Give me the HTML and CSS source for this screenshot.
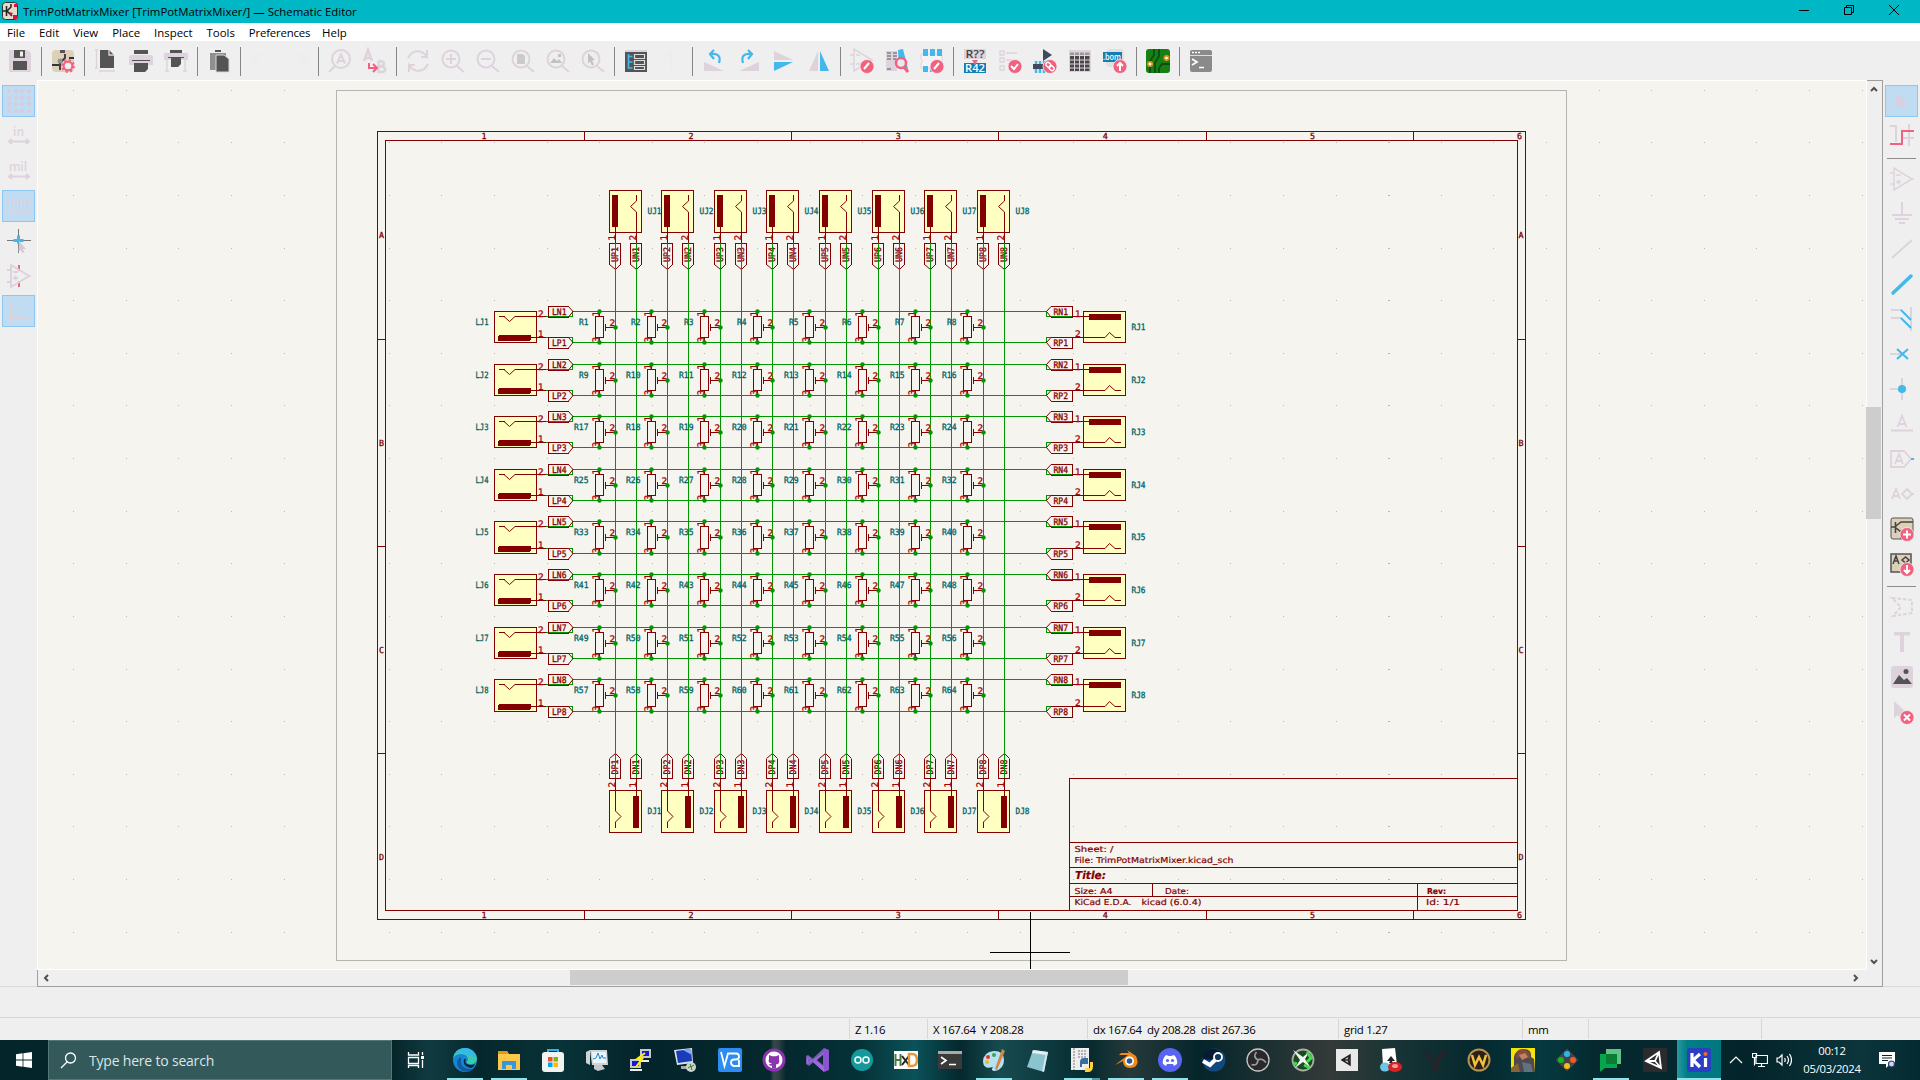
FILE: index.html
```html
<!DOCTYPE html>
<html lang="en">
<head>
<meta charset="utf-8">
<title>TrimPotMatrixMixer — Schematic Editor</title>
<link rel="stylesheet" href="styles.css">
</head>
<body>
<header class="titlebar">
  <svg class="app-icon" viewBox="0 0 16 18"><rect x=".5" y=".5" width="15" height="17" rx="3" fill="#e4dccb" stroke="#333"/><path d="M1 9h3M4.500 4v10M5 9l4-4V2M5 9l5 5" stroke="#222" stroke-width="1.500" fill="none"/><path d="M12 2h3v3h-3zM11 13h4v4h-4zM7 10l4 1-2 3z" fill="#e0123c"/></svg>
  <span class="title">TrimPotMatrixMixer [TrimPotMatrixMixer/] — Schematic Editor</span>
  <div class="controls">
    <svg viewBox="0 0 12 12"><path d="M1 6.500h10"/></svg>
    <svg viewBox="0 0 12 12"><path d="M1.500 3.500h7v7h-7zM3.500 3.500v-2h7v7h-2"/></svg>
    <svg viewBox="0 0 12 12"><path d="M1 1l10 10M11 1L1 11"/></svg>
  </div>
</header>
<nav class="menu"><span>File</span><span>Edit</span><span>View</span><span>Place</span><span>Inspect</span><span>Tools</span><span class="prefs">Preferences</span><span>Help</span></nav>

<div class="toolbar">
  <i><svg viewBox="0 0 24 24"><path d="M1 1h18l4 3v19H1z" fill="#ded3dd"/><path d="M6 1h11v8H6zM5 12h14v9H5z" fill="#545454"/><path d="M12 2.500h3v5h-3z" fill="#eee"/></svg></i><b></b>
  <i><svg viewBox="0 0 24 24"><rect x="1" y="1" width="22" height="22" rx="4" fill="#ddd0b9"/><path d="M9 1h5v3H9z" fill="#555"/><path d="M1 16h7M9 12v9M10 13l4-4V5M18 9h5" fill="none" stroke="#333" stroke-width="1.800"/><circle cx="9" cy="12" r="2.500" fill="#8c9494"/><circle cx="17" cy="17" r="4.300" fill="#efefef" stroke="#f0627f" stroke-width="2"/><circle cx="17" cy="17" r="5.800" fill="none" stroke="#f0627f" stroke-width="2.200" stroke-dasharray="2.200 2.350"/></svg></i><b></b>
  <i><svg viewBox="0 0 24 24"><path d="M6 1h9l5 5v13H6z" fill="#545454"/><path d="M15 1v5h5M1 1h3M2.500 1v18M1 19h3M6 22h14M6 20.500v3M20 20.500v3" fill="none" stroke="#ded3dd" stroke-width="1.300"/></svg></i>
  <i><svg viewBox="0 0 24 24"><path d="M0 8q0-2 2-2h20q2 0 2 2v8H0z" fill="#ded3dd"/><path d="M5 1h14v4H5zM5 14h14v6l-3 3H5z" fill="#545454"/><path d="M3 11.500h18" stroke="#545454"/></svg></i>
  <i><svg viewBox="0 0 24 24"><path d="M0 4h24v7H0z" fill="#ded3dd"/><path d="M6 1h12v3H6zM7 9h10v6l-3 3H7z" fill="#545454"/><path d="M4 8.500h16" stroke="#545454"/><path d="M3 11v11M21 11v11M1 22h4M19 22h4" stroke="#ded3dd" stroke-width="1.500"/></svg></i><b></b>
  <i><svg viewBox="0 0 24 24"><path d="M3 4h16v17H3z" fill="#8f8f8f"/><path d="M8 1h6v2H8z" fill="#545454"/><path d="M9 6h8l5 4v13H9z" fill="#545454" stroke="#ded3dd"/></svg></i><b></b>
  <i><svg class="ghost" viewBox="0 0 24 24"><path d="M3 5v7h7M4 11Q12 0 21 13" /></svg></i><i><svg class="ghost" viewBox="0 0 24 24"><path d="M21 5v7h-7M20 11Q12 0 3 13"/></svg></i><b></b>
  <i><svg class="line" viewBox="0 0 24 24"><circle cx="13" cy="10" r="9"/><path d="M7 17l-6 6M9 14.500l4-9 4 9M10 12h6"/></svg></i>
  <i><svg class="line" viewBox="0 0 24 24"><path d="M1 12L5 1l4 11M2.500 9h5M15.500 12v11h4q4-1 2-4.500-1-1-6-1 5 0 5.500-3-.5-2.500-5.500-2.500" stroke-width="2.500"/><path d="M6 14v5h8M10 15l4 4-4 4" style="stroke:#f0627f"/></svg></i><b></b>
  <i><svg class="line" viewBox="0 0 24 24"><path d="M2 9Q6 1 14 2.500q4 1 7 5V1M21 8h-6M22 15q-4 8-12 6.500-4-1-7-5V23M3 16h6"/></svg></i>
  <i><svg class="line" viewBox="0 0 24 24"><circle cx="10" cy="10" r="8.500"/><path d="M16 17l7 6M5 10h10M10 5v10"/></svg></i>
  <i><svg class="line" viewBox="0 0 24 24"><circle cx="10" cy="10" r="8.500"/><path d="M16 17l7 6M5 10h10"/></svg></i>
  <i><svg class="line" viewBox="0 0 24 24"><circle cx="10" cy="10" r="8.500"/><path d="M16 17l7 6"/><path d="M6 5h6l2 2v8H6z" style="fill:#c9ccc9;stroke:none"/></svg></i>
  <i><svg class="line" viewBox="0 0 24 24"><circle cx="10" cy="10" r="8.500"/><path d="M16 17l7 6"/><path d="M4 14l4-5 3 3 2-2 3 4zM12 5h3v3h-3z" style="fill:#c0c3c0;stroke:none"/></svg></i>
  <i><svg class="line" viewBox="0 0 24 24"><circle cx="10" cy="10" r="8.500"/><path d="M16 17l7 6"/><path d="M7 4l7 7-3 .5 2 4-2 1-2-4-2 2z" style="fill:#c0c3c0;stroke:none"/></svg></i><b></b>
  <i><svg viewBox="0 0 24 24"><path d="M1 2h22v21H1z" fill="#545454"/><path d="M1 1h22v2H1z" fill="#ded3dd"/><path d="M4.500 5v14h4M4.500 7.500h4M4.500 13h4" stroke="#42b8eb" stroke-width="1.700" fill="none"/><path d="M10.500 5.500h10v4h-10zM10.500 11.500h10v4h-10zM10.500 17.500h10v3h-10z" fill="none" stroke="#ddd" stroke-width="1.200"/></svg></i>
  <i><svg class="ghost" viewBox="0 0 24 24"><path d="M12 23V3M6 9l6-6 6 6"/></svg></i><b></b>
  <i><svg viewBox="0 0 24 24"><path d="M2 13v9h20z" fill="#ded3dd"/><path d="M17 14Q20 4 9 5M12 1L8 5l4 5" fill="none" stroke="#42b8eb" stroke-width="2.200"/></svg></i>
  <i><svg viewBox="0 0 24 24"><path d="M22 13v9H2z" fill="#ded3dd"/><path d="M6 14Q3 4 14 5M11 1l4 4-4 5" fill="none" stroke="#42b8eb" stroke-width="2.200"/></svg></i>
  <i><svg viewBox="0 0 24 24"><path d="M2 2v9h19z" fill="#ded3dd"/><path d="M2 13v9l19-9z" fill="#42b8eb"/></svg></i>
  <i><svg viewBox="0 0 24 24"><path d="M11 2v20H2z" fill="#ded3dd"/><path d="M13 2v20h9z" fill="#42b8eb"/></svg></i><b></b>
  <i><svg class="line" viewBox="0 0 24 24"><path d="M4 0v22l18-11zM0 6h4M0 15h4M6 6h4M6 15h4" stroke-width="1.500"/><use href="#badge"/><path class="w" d="M14 20l5-6"/></svg></i>
  <i><svg viewBox="0 0 24 24"><path d="M1 2h11v20H1z" fill="#ded3dd"/><path d="M13 1l5-1 5 20h-9z" fill="#42b8eb"/><path d="M2 4h4M8 4h4M2 7h4M8 7h4M2 10h4M8 10h3M2 20h4" stroke="#545454"/><circle cx="16" cy="14" r="5" fill="#e5eaf0" stroke="#f0627f" stroke-width="2.500"/><path d="M19 18l4 5" stroke="#f0627f" stroke-width="3"/></svg></i>
  <i><svg viewBox="0 0 24 24"><path d="M1 5h21v14H1v-4q3-2.500 0-5z" fill="#f5f3f5" stroke="#ded3dd"/><path d="M3 0h5v7H3zM10 0h5v7h-5zM17 0h5v7h-5zM3 17h5v6H3zM10 17h5v6h-5z" fill="#42b8eb"/><use href="#badge"/><path class="w" d="M14 20l5-6"/></svg></i><b></b>
  <i><svg viewBox="0 0 24 24"><path d="M1 0h22v10H1z" fill="#ded3dd"/><path d="M1 14h22v10H1z" fill="#147eb4"/><path d="M9 11h6l-3 5z" fill="#f0627f"/><text x="2.500" y="9" textLength="19" lengthAdjust="spacingAndGlyphs" class="ic">R??</text><text x="2" y="23" textLength="20" lengthAdjust="spacingAndGlyphs" class="ic white">R42</text></svg></i>
  <i><svg class="line" viewBox="0 0 24 24"><path d="M2 2h4v4H2zM2 9h4v4H2zM2 17h4v4H2zM8 4h11M8 11h6" stroke-width="1.300"/><use href="#badge"/><path class="w" d="M13 17l3 3 4-5"/></svg></i>
  <i><svg viewBox="0 0 24 24"><path d="M10 0l9 6-9 6z" fill="#3f4a5c"/><path d="M0 15h14v5H0z" fill="#3f4a5c"/><path d="M3 12v3M7 12v3M11 12v3M3 20v4M7 20v4M11 20v4" stroke="#42b8eb" stroke-width="2.500"/><use href="#badge"/><g fill="none" stroke="#fff" stroke-width="1.400" transform="rotate(45 17 17.500)"><rect x="12" y="15.500" width="5.500" height="4" rx="2"/><rect x="16.500" y="15.500" width="5.500" height="4" rx="2"/></g></svg></i>
  <i><svg viewBox="0 0 24 24"><path d="M1 1h22v22H1z" fill="#ded3dd"/><path d="M2 3.500h19.500V6H2z" fill="#999"/><path d="M2 7h19.500v15H2z" fill="#484848"/><path d="M6.500 3v19M11.500 3v19M16.500 3v19M2 11h20M2 15h20M2 19h20" stroke="#ded3dd"/></svg></i>
  <i><svg viewBox="0 0 24 24"><rect x="3" width="18" height="18" rx="4" fill="#e1dfe2"/><path d="M0 3h19v10H0z" fill="#147eb4"/><text x="0" y="11" textLength="18" lengthAdjust="spacingAndGlyphs" class="ic white bom">.bom</text><use href="#badge"/><path class="w" d="M17 22v-8M14 17l3-3 3 3"/></svg></i><b></b>
  <i><svg viewBox="0 0 24 24"><rect width="24" height="24" rx="3" fill="#168016"/><path d="M8 0v6L4 12v12M13 0v7l-4 7v10M24 15h-8l-3 4v5" fill="none" stroke="#0a4f0d" stroke-width="1.800"/><circle cx="20.500" cy="9" r="2.200" fill="#fff" stroke="#e09015" stroke-width="1.700"/><circle cx="4" cy="15" r="2.200" fill="#fff" stroke="#e09015" stroke-width="1.700"/></svg></i><b></b>
  <i><svg viewBox="0 0 24 24"><rect x="1" y="1" width="22" height="22" rx="2" fill="#8a8a8a"/><path d="M1 6.500h22" stroke="#ddd"/><path d="M3 3.500h2M6 3.500h2M9 3.500h2M3 10l5 3-5 3M10 18.500h5" stroke="#fff" stroke-width="1.700" fill="none"/></svg></i>
</div>

<main class="work">
  <div class="side left">
    <i class="on"><svg class="dots" viewBox="0 0 24 24"><path d="M2 2h.1M9 2h.1M15 2h.1M22 2h.1M2 9h.1M9 9h.1M15 9h.1M22 9h.1M2 15h.1M9 15h.1M15 15h.1M22 15h.1M2 22h.1M9 22h.1M15 22h.1M22 22h.1"/></svg></i>
    <i><svg class="line" viewBox="0 0 24 24"><text x="6" y="12" textLength="11" class="unit">in</text><path d="M3 17.500h18M5 15l-3 2.500 3 2.500M19 15l3 2.500-3 2.500"/></svg></i>
    <i><svg class="line" viewBox="0 0 24 24"><text x="2" y="12" textLength="18" class="unit">mil</text><path d="M3 17.500h18M5 15l-3 2.500 3 2.500M19 15l3 2.500-3 2.500"/></svg></i>
    <i class="on"><svg class="line" viewBox="0 0 24 24"><text x="0" y="12" textLength="23" class="unit">mm</text><path d="M3 17.500h18M5 15l-3 2.500 3 2.500M19 15l3 2.500-3 2.500"/></svg></i>
    <i><svg viewBox="0 0 24 24"><path d="M0 11.500h24M11.500 0v24" stroke="#777"/><path d="M6.500 11.500h10M11.500 6.500v8" stroke="#42b8eb" stroke-width="3"/><path d="M12 12l7 8-3.500 0 2 3-2 1-2-3-2 2z" fill="#d5c9d6"/></svg></i>
    <i><svg class="line" viewBox="0 0 24 24"><path d="M12 1v6M12 17v6" style="stroke:#f0627f"/><path d="M4 1v22l18-11zM0 6h4M0 18h4M22 12h2M6 8h5M6 14h5M8.500 11.500v5"/></svg></i>
    <i class="on"><svg class="line" viewBox="0 0 24 24"><path d="M4 2v18h19" /><path d="M1 20l5-3v6zM4 12h8v8" stroke-width="1"/></svg></i>
  </div>
  <div class="viewport">
    <svg id="sheet" viewBox="38 81 1828 888" shape-rendering="crispEdges"></svg>
    <div class="vscroll"><svg viewBox="0 0 8 6"><path d="M1 5l3-3 3 3"/></svg><span class="vthumb"></span><svg viewBox="0 0 8 6"><path d="M1 1l3 3 3-3"/></svg></div>
    <div class="hscroll"><svg viewBox="0 0 6 8"><path d="M5 1L2 4l3 3"/></svg><span class="hthumb"></span><svg viewBox="0 0 6 8"><path d="M1 1l3 3-3 3"/></svg></div>
  </div>
  <div class="side right">
    <i class="on"><svg viewBox="0 0 24 24"><path d="M6 4l12 10h-5l3 5-3 1-3-5-4 3z" fill="#d8cfdf"/></svg></i>
    <i><svg class="line" viewBox="0 0 24 24"><path d="M0 2h6v16M19 0v22M13 14h11"/><path d="M0 20h12V7h12" style="stroke:#f0627f"/></svg></i><b></b>
    <i><svg class="line" viewBox="0 0 24 24"><path d="M4 1v22l18-11zM0 6h4M0 17h4M22 12h2M6 8h5M6 15h5M8.500 12.500v5" stroke-width="1.500"/></svg></i>
    <i><svg class="line" viewBox="0 0 24 24"><path d="M12 0v13M2 13h20M5 17h14M9 21h6"/></svg></i>
    <i><svg class="line" viewBox="0 0 24 24"><path d="M2 21L22 3"/></svg></i>
    <i><svg viewBox="0 0 24 24"><path d="M3 21L21 4" stroke="#42b8eb" stroke-width="3.500" stroke-linecap="round"/></svg></i>
    <i><svg class="line" viewBox="0 0 24 24"><path d="M1 3h11M1 11h11M21 0v24" /><path d="M11 3l10 10M11 11l10 10" style="stroke:#42b8eb"/></svg></i>
    <i><svg class="line" viewBox="0 0 24 24"><path d="M0 12h12"/><path d="M7 7l11 10M18 7L7 17" style="stroke:#42b8eb"/></svg></i>
    <i><svg class="line" viewBox="0 0 24 24"><path d="M0 12h12M12 1v22"/><circle cx="12" cy="12" r="4" style="fill:#42b8eb;stroke:none"/></svg></i>
    <i><svg class="line" viewBox="0 0 24 24"><path d="M7.500 15L12 4l4.500 11M9 12h6M1 18.500h22" stroke-width="1.800"/></svg></i>
    <i><svg class="line" viewBox="0 0 24 24"><path d="M1 4h13l7 8-7 8H1zM5 17L9 7l4 10M6 14h6" stroke-width="1.800"/><path d="M21 12h3" style="stroke:#42b8eb"/></svg></i>
    <i><svg class="line" viewBox="0 0 24 24"><path d="M2 17L6 7l4 10M3 14h6M12 12l5-5 5 5-5 5zM21 12h3" stroke-width="1.800"/></svg></i>
    <i><svg viewBox="0 0 24 24"><rect x="1" y="1" width="22" height="21" rx="2" fill="#ddd0b9" stroke="#545454"/><path d="M1 10h4M5.500 5v11M6 9l5-4h12M6 11l5 4v7" stroke="#444" stroke-width="1.600" fill="none"/><use href="#badge"/><path class="w" d="M13 17.500h8M17 13.500v8"/></svg></i>
    <i><svg viewBox="0 0 24 24"><path d="M1 2h20v18H1z" fill="#ddd0b9" stroke="#545454" stroke-width="1.500"/><path d="M3 12L6 4l3 8M4 9h4M12 8l3.500-3L19 8l-3.500 3z" stroke="#444" stroke-width="1.500" fill="none"/><use href="#badge"/><path class="w" d="M17 13v8M14 18l3 3 3-3"/></svg></i><b></b>
    <i><svg class="line" viewBox="0 0 24 24"><path d="M2 3l20 2v13L3 21l8-9z" stroke-dasharray="3.500 2"/></svg></i>
    <i><svg viewBox="0 0 24 24"><path d="M4 2h16v3.500h-6V22h-4V5.500H4z" fill="#ded3dd"/></svg></i>
    <i><svg viewBox="0 0 24 24"><rect x="1" y="1" width="22" height="22" rx="3" fill="#ded3dd"/><path d="M3 19l6-9 5 5 3-2 5 6z" fill="#545454"/><circle cx="16" cy="6.500" r="2.500" fill="#545454"/></svg></i>
    <i><svg viewBox="0 0 24 24"><path d="M4 1l12 11-4 1 2 5-3 1-3-4-4 3z" fill="#ded3dd"/><use href="#badge"/><path class="w" d="M14 14.500l6 6M20 14.500l-6 6"/></svg></i>
  </div>
</main>
<div class="msgpanel"></div>
<footer class="status"><span class="s0"></span><span class="s1">Z 1.16</span><span class="s2">X 167.64&nbsp; Y 208.28</span><span class="s3">dx 167.64&nbsp; dy 208.28&nbsp; dist 267.36</span><span class="s4">grid 1.27</span><span class="s5">mm</span><span class="s6"></span><span class="s7"></span></footer>

<div class="taskbar">
  <div class="start"><svg viewBox="0 0 16 16"><path d="M0 2.200L6.600 1.300v6.300H0zM7.400 1.200L16 0v7.600H7.400zM0 8.400h6.600v6.300L0 13.800zM7.400 8.400H16V16l-8.600-1.200z" fill="#fff"/></svg></div>
  <div class="search"><svg viewBox="0 0 17 17"><circle cx="10.500" cy="6" r="5"/><path d="M7 10l-6 6"/></svg><span>Type here to search</span></div>
  <div class="apps">
  <i class="tv"><svg viewBox="0 0 24 24"><path d="M4.500 4v3h10V4M4.500 9.500h10v6h-10zM4.500 20v-2.500h10V20M18.500 4v3M18.500 12v8" stroke="#fff" fill="none" stroke-width="1.300"/><path d="M17 8h3v3h-3z" fill="#fff"/></svg></i>
  <i class="run"><svg viewBox="0 0 24 24"><circle cx="12" cy="12" r="12" fill="#1686d2"/><path d="M0 10Q2 0 12 0q11 1 12 11-1 6-8 5-4-1-1-4 0-6-7-6-5 0-8 4z" fill="#3ccaa8"/><path d="M5 5q6-2 10 3l8 1Q20 0 12 0 4 1 1 7z" fill="#35b9e8"/><path d="M8 12q-1 10 12 9-9 6-15-2-3-7 3-10z" fill="#115a9e"/><path d="M11 11q-2 7 7 9 3-1 4-4-4 2-8 0-3-2-1-5z" fill="#03282d"/></svg></i>
  <i class="run"><svg viewBox="0 0 24 24"><path d="M1 3h9l2 3h11v16H1z" fill="#fbc84a"/><path d="M1 3h9l1 3H1z" fill="#e09a10"/><path d="M5 21v-8h14v8h-4v-4h-6v4z" fill="#3a95dd"/></svg></i>
  <i><svg viewBox="0 0 24 24"><path d="M7 7V2h10v5" fill="none" stroke="#2bb1ec" stroke-width="2"/><rect x="1" y="4" width="22" height="20" rx="3" fill="#f2f2f2"/><path d="M7 9h4.500v4.500H7z" fill="#f25022"/><path d="M12.500 9H17v4.500h-4.500z" fill="#7fba00"/><path d="M7 14.500h4.500V19H7z" fill="#00a4ef"/><path d="M12.500 14.500H17V19h-4.500z" fill="#ffb900"/></svg></i>
  <i><svg viewBox="0 0 24 24"><path d="M1 4l4-2v15l-4-2zM5 2h17l1 15H7z" fill="#cfd4d6"/><path d="M7 4h14l.5 11H8z" fill="#e9f4fa"/><path d="M8 11l3-1 2-5 2 6 2-4 1 3h3" fill="none" stroke="#2787c8"/><path d="M9 17h8l3 4-7 2-4-2z" fill="#c5c9cb"/></svg></i>
  <i><svg viewBox="0 0 24 24"><path d="M11 1h11v9H11zM1 11h11v9H1z" fill="#c8c8c8"/><path d="M13 3h7v5h-7zM3 13h7v5H3z" fill="#1717d8"/><path d="M10 12h10v2H10zM1 21h12v2H1z" fill="#eee"/><path d="M16 5l-8 6h5l-6 8" fill="none" stroke="#ffef00" stroke-width="2"/></svg></i>
  <i><svg viewBox="0 0 24 24"><path d="M1 2l18-2 1 15-16 2z" fill="#dce4ef"/><path d="M3 3l15-2 1 12-14 2z" fill="#193cb8"/><path d="M10 2l8-1 1 6z" fill="#88a9ef"/><path d="M8 18h8v3H8z" fill="#aaa"/><circle cx="18" cy="19" r="5" fill="#ccd5c9"/><path d="M15 20l3-2-1-2M21 17l-3 2 1 3" stroke="#287b2a" fill="none"/></svg></i>
  <i><svg viewBox="0 0 24 24"><rect width="24" height="24" rx="2" fill="#2b8cf2"/><path d="M3 4l3.500 14L10 5.500h8q3 0 3 3t-3 3h-2q-3 0-3 3t3 3.500h5V12" fill="none" stroke="#fff" stroke-width="1.800"/></svg></i>
  <i><svg viewBox="0 0 24 24"><circle cx="12" cy="12" r="11.500" fill="#8a34ad"/><circle cx="12" cy="12" r="8.500" fill="#fff"/><path d="M7 7l3 1.200h4L17 7v4q1.500 5-3 5.500v4h-4v-3q-2.500 1-3.500-1.500 2 .8 3.500-.5Q5.500 15 7 11z" fill="#8a34ad"/></svg></i>
  <i><svg viewBox="0 0 24 24"><path d="M18 0l5 2v20l-5 2L2 9l-1 1v5l1 1L18 4z" fill="#8b55d0"/><path d="M18 0v5L3 18l-3-2V8l2-1 16 12v5L2 10v5z" fill="#a873e8" opacity=".7"/><path d="M17 7v10l-6-5z" fill="#0c2b30"/></svg></i>
  <i><svg viewBox="0 0 24 24"><circle cx="12" cy="12" r="11" fill="#149a9d"/><circle cx="8" cy="12" r="3" fill="none" stroke="#fff" stroke-width="1.500"/><circle cx="16" cy="12" r="3" fill="none" stroke="#fff" stroke-width="1.500"/></svg></i>
  <i><svg viewBox="0 0 24 24"><path d="M0 3h24v18H0z" fill="#fff"/><path d="M1.500 6v12M6.500 6v12M1 12h6" stroke="#4a7a42" stroke-width="2"/><path d="M8 8l7 9M15 8l-7 9" stroke="#222" stroke-width="2"/><path d="M15 6h3q5 0 5 6t-5 6h-3z" fill="none" stroke="#e59a42" stroke-width="2.500"/></svg></i>
  <i><svg viewBox="0 0 24 24"><path d="M0 3h24v18H0z" fill="#3a3a3a"/><path d="M0 3h24v3H0z" fill="#aaa"/><path d="M3 9l5 3.500L3 16M11 16.500h7" fill="none" stroke="#fff" stroke-width="1.700"/></svg></i>
  <i class="run"><svg viewBox="0 0 24 24"><path d="M1 14Q1 4 12 3q10 0 10 9t-9 11q-5 0-2-4-9 3-10-5z" fill="#b9dff2"/><circle cx="6" cy="9" r="2" fill="#e83030"/><circle cx="12" cy="7" r="2" fill="#39a845"/><circle cx="5" cy="14" r="2" fill="#e5bd18"/><path d="M13 21L20 1l3 2-8 19z" fill="#cc8844"/></svg></i>
  <i><svg viewBox="0 0 24 24"><path d="M7 2l15 2-4 20L1 19z" fill="#8ac5cf"/><path d="M7 2l15 2-1 3L6 5z" fill="#e7edf0"/><path d="M22 4l-4 20-2-1 4-19z" fill="#d0e6e9"/></svg></i>
  <i class="run split"><svg viewBox="0 0 24 24"><path d="M1 0h18v22H1z" fill="#eee"/><path d="M4 0v22M8 3h8M8 6h8M8 9h8" stroke="#777" stroke-dasharray="2 1"/><path d="M10 14q0-4 4-4h4v6h-6v3h-2z" fill="#376f9e"/><path d="M23 14v4q0 6-5 6h-3v-4h5v-6z" fill="#ffd43b"/></svg></i>
  <i class="run"><svg viewBox="0 0 24 24"><path d="M1 17L14 7H5l2-2h8l-2-3 9 6q5 11-6 12-7 0-7-7z" fill="#f18a1a"/><circle cx="15.500" cy="13" r="4.500" fill="#fff"/><circle cx="15.500" cy="13" r="2.800" fill="#245b9b"/></svg></i>
  <i class="run"><svg viewBox="0 0 24 24"><circle cx="12" cy="12" r="12" fill="#5865f2"/><path d="M8 7l3 1h2l3-1q4 4 3 9l-3 2-1-2H9l-1 2-3-2q-1-5 3-9z" fill="#fff"/><circle cx="9.500" cy="12.500" r="1.600" fill="#5865f2"/><circle cx="14.500" cy="12.500" r="1.600" fill="#5865f2"/></svg></i>
  <i><svg viewBox="0 0 24 24"><circle cx="12" cy="12" r="11.500" fill="#10497e"/><path d="M1 7Q8-4 20 4L10 12 1 11z" fill="#061c35"/><path d="M1 13l7 4 6-6" stroke="#fff" stroke-width="4" fill="none"/><circle cx="16" cy="9" r="4" fill="#10365c" stroke="#fff" stroke-width="1.800"/></svg></i>
  <i><svg viewBox="0 0 24 24"><circle cx="12" cy="12" r="11" fill="#29292c" stroke="#c6c6c6" stroke-width="1.300"/><path d="M10.500 4q-4 5 1.500 8M5.500 16.500q6 2 6.500-4.500M20 14.500q-4-5-8-2.500" stroke="#999" stroke-width="1.800" fill="none"/></svg></i>
  <i><svg viewBox="0 0 24 24"><circle cx="12" cy="12" r="10.500" fill="#1d4a20" stroke="#a5afa5" stroke-width="1.800"/><path d="M2 2l10 7 7-6-5 8 6 9-8-6-8 6 5-8z" fill="#eef4ee"/><path d="M16 4l4 6-4 4M13 17l6 3M5 14l-1 3" stroke="#46db4e" stroke-width="3" fill="none"/></svg></i>
  <i><svg viewBox="0 0 24 24"><path d="M1 1h22v22H1z" fill="#e9e9e9"/><path d="M7 12l8-5v10zM7 12h6l2-5M13 12l2 5" fill="none" stroke="#222" stroke-width="1.500"/></svg></i>
  <i><svg viewBox="0 0 24 24"><path d="M3 1l13-1 2 17-14 2z" fill="#fff"/><path d="M12 8l4 5h-3l1 2h-4l1-2H8z" fill="#222"/><ellipse cx="6" cy="19" rx="5" ry="4.500" fill="#6ac6e6"/><ellipse cx="16" cy="19" rx="7" ry="5" fill="#d72125"/><ellipse cx="16" cy="18" rx="3" ry="2" fill="#f59a9a"/></svg></i>
  <i><svg viewBox="0 0 24 24"><path d="M1 1l6 3 2 6h6l2-6 6-3-2 9-5 4v8l-4 2-4-2v-8l-5-4z" fill="#20262c"/></svg></i>
  <i><svg viewBox="0 0 24 24"><circle cx="12" cy="12" r="10.500" fill="#2b211a" stroke="#b8914d" stroke-width="2"/><path d="M5 7l3 10 4-8 4 8 3-10" fill="none" stroke="#f3c136" stroke-width="2.500"/></svg></i>
  <i><svg viewBox="0 0 24 24"><path d="M0 0h24v24H0z" fill="#f5e500"/><path d="M3 9q2-8 9-8 9 0 8 8l3 2 1 13H2l1-7z" fill="#4f4a4f"/><path d="M6 4q6-6 12 1l1 5-5 1-5-2-4 2z" fill="#8d4a38"/><path d="M8 7l6-2 3 4-6 3z" fill="#c08263"/><path d="M0 20l7-5 2 9H0z" fill="#876338"/><path d="M11 14l9 2 2 8h-9z" fill="#61717f"/></svg></i>
  <i><svg viewBox="0 0 24 24"><path d="M12 1l11 11-11 11L1 12z" fill="#434448" stroke="#434448" stroke-linejoin="round"/><circle cx="12" cy="6" r="3" fill="#28b8ef"/><circle cx="6" cy="12" r="3" fill="#12b918"/><circle cx="18" cy="12" r="3" fill="#f05a28"/><circle cx="12" cy="18" r="3" fill="#f4bd14"/></svg></i>
  <i class="run"><svg viewBox="0 0 24 24"><path d="M7 1h15v15H7z" fill="#5fc483"/><path d="M1 6h17v14H6l-5 4z" fill="#08a54c"/><path d="M7 6h11v10H7z" fill="#087d35"/></svg></i>
  <i><svg viewBox="0 0 24 24"><path d="M0 0h24v24H0z" fill="#2b2b2d"/><path d="M3 13L16 4l2 16zM3 13h9l4-9M12 13l6 7" fill="none" stroke="#fff" stroke-width="1.800"/></svg></i>
  <i class="run active"><svg viewBox="0 0 24 24"><rect width="24" height="24" rx="3" fill="#2b3fc2"/><path d="M5 5v14M13 6l-7 6 7 7M18.500 10v9" stroke="#fff" stroke-width="3.200" fill="none"/><circle cx="18.500" cy="6" r="2" fill="#f36a24"/></svg></i>
  </div>
  <div class="tray">
    <svg viewBox="0 0 16 16"><path d="M2 11l6-6 6 6"/></svg>
    <svg viewBox="0 0 16 16"><path d="M4 3.500h11.500v8H4zM9.500 11.500v3M6 14.500h7M.5 1.500h4v4h-4zM2.500 5.500v8"/></svg>
    <svg viewBox="0 0 16 16"><path d="M1 6h2l3-3v10l-3-3H1zM8.500 6q1.500 2 0 4M11 4q3 4 0 8M13.500 2q4 6 0 12"/></svg>
    <div class="clock"><span>00:12</span><span>05/03/2024</span></div>
    <svg class="note" viewBox="0 0 16 16"><path d="M0 0h16v12h-5l-4 4v-4H0z" fill="#fff" stroke="none"/><path d="M3 3.500h10M3 6h10M3 8.500h6" stroke="#05282d"/><circle cx="12.500" cy="12" r="3" fill="#dce" stroke="#246"/></svg>
  </div>
</div>
<svg class="defs" width="0" height="0"><defs><g id="badge"><circle cx="17" cy="17.500" r="7" fill="#f0627f" stroke="#f5edf0" stroke-width=".8"/></g></defs></svg>
<script src="script.js"></script>
</body>
</html>
```
FILE: styles.css
```css
* { box-sizing: border-box; }
body { margin: 0; width: 1920px; height: 1080px; overflow: hidden; display: flex; flex-direction: column; background: #efefef; font: 11.4px "Open Sans", "Noto Sans", sans-serif; color: #000; }
i { font-style: normal; display: flex; align-items: center; justify-content: center; flex: none; }
svg { display: block; flex: none; }
.titlebar { height: 23px; background: #00b7c6; display: flex; align-items: center; padding: 0 20px 0 2px; flex: none; }
.app-icon { width: 16px; height: 18px; margin-bottom: 2px; }
.title { margin-left: 5px; white-space: nowrap; }
.controls { margin-left: auto; display: flex; gap: 33px; }
.controls svg { width: 12px; height: 12px; fill: none; stroke: #000; margin-bottom: 3px; }
.menu { height: 18px; background: #fff; display: flex; align-items: center; padding-left: 7px; gap: 14px; flex: none; line-height: 18px; padding-top: 1px; }
.prefs { letter-spacing: -.2px; margin-right: -2px; }
.toolbar { height: 39px; display: flex; align-items: center; padding-left: 2px; flex: none; }
.toolbar i { width: 35px; height: 35px; }
.toolbar b { width: 8px; height: 36px; display: flex; justify-content: center; }
.toolbar b::before { content: ""; width: 1px; height: 29px; margin-top: 4px; background: #858585; }
.toolbar svg, .side svg { width: 24px; height: 24px; overflow: visible; }
.ghost { fill: none; stroke: #edebed; stroke-width: 1.2; }
.line { fill: none; stroke: #ded3dd; stroke-width: 2; }
.w { fill: none; stroke: #fff; stroke-width: 2; }
.ic { font: 600 10px "Open Sans", sans-serif; fill: #444; }
.white { fill: #fff; }
.bom { font-size: 9px; }
.unit { font: 600 12px "Open Sans", sans-serif; fill: #ded3dd; stroke: none; }
.dots { stroke: #d8cbdc; stroke-width: 4; stroke-linecap: round; }
.work { height: 907px; display: flex; flex: none; border-bottom: 1px solid #d9d9d9; }
.side { display: flex; flex-direction: column; padding-top: 4px; }
.side i { height: 32px; width: 33px; margin: 1px 0 2px; }
.side .on { background: #bfdcf3; border: 1px solid #8fc6f1; }
.side b { height: 8px; width: 29px; margin-left: 2px; display: flex; align-items: center; }
.side b::before { content: ""; height: 1px; width: 100%; background: #8c8c8c; }
.left { width: 37px; padding-left: 2px; }
.right { width: 37px; padding-left: 2px; }
.viewport { width: 1846px; height: 907px; border: 1px solid #9f9f9f; display: grid; grid-template: 889px 16px / 1828px 16px; background: #efefef; }
#sheet { width: 1828px; height: 888px; background: #f5f4ef; outline: 1px solid #fff; }
.vscroll { display: flex; flex-direction: column; align-items: center; padding: 5px 0; }
.vscroll svg, .hscroll svg { fill: none; stroke: #505050; stroke-width: 2; }
.vscroll svg { width: 8px; height: 6px; }
.vthumb { width: 15px; height: 112px; background: #cdcdcd; margin: 315px 1px auto 0; }
.hscroll { display: flex; align-items: center; padding: 0 7px 1px 5px; }
.hscroll svg { width: 6px; height: 8px; }
.hthumb { width: 558px; height: 15px; background: #cdcdcd; margin: 0 auto 0 521px; }
.msgpanel { height: 31px; border-bottom: 1px solid #d7d7d7; flex: none; }
.status { height: 22px; display: flex; flex: none; padding-top: 1px; line-height: 21px; letter-spacing: -.3px; }
.status span { height: 20px; padding-left: 5px; border-left: 1px solid #d7d7d7; white-space: pre; }
.status .s0 { width: 849px; border: 0; }
.s1 { width: 78px; } .s2 { width: 160px; } .s3 { width: 251px; } .s4 { width: 184px; } .s5 { width: 66px; } .s6 { width: 173px; } .s7 { flex: 1; }
.taskbar { height: 40px; display: flex; flex: none; color: #fff; background: linear-gradient(90deg, #04252a 0, #04252a 390px, #103a40 430px, #04272c 480px, #083338 560px, #03242a 640px, #04282d 770px, #35494b 774px, #2d4244 778px, #04282d 786px, #053237 860px, #0b5259 915px, #04282d 960px, #174b50 1000px, #052a2f 1090px, #27393a 1130px, #04252a 1200px, #333a38 1330px, #173335 1400px, #04282d 1480px, #063a40 1540px, #04282d 1600px, #04282d 1680px, #03242a 1750px, #0b353b 1860px, #042a30 1920px); }
.start { width: 48px; display: flex; align-items: center; justify-content: center; }
.start svg { width: 16px; height: 16px; }
.search { width: 344px; background: #34595b; border: 1px solid #567778; display: flex; align-items: center; padding-left: 11px; font-size: 14px; color: #dce5e5; }
.search svg { width: 17px; height: 17px; fill: none; stroke: #fff; stroke-width: 1.3; margin-right: 12px; }
.search span { letter-spacing: -.2px; }
.apps { display: flex; }
.apps i { width: 44.08px; height: 40px; position: relative; }
.apps .tv { width: 51px; padding-right: 3px; }
.apps svg { width: 24px; height: 24px; }
.run::after { content: ""; position: absolute; left: 4px; right: 4px; bottom: 0; height: 2px; background: #8fe3e9; }
.split::after { background: linear-gradient(90deg, #8fe3e9 28px, #4f9a9e 28px); }
.apps .active { background: linear-gradient(90deg, #2a9aa0, #007e86 10px, #00777f); }
.active::after { left: 0; right: 0; }
.tray { display: flex; align-items: center; margin-left: auto; padding-right: 25px; }
.tray > svg { width: 16px; height: 16px; fill: none; stroke: #fff; stroke-width: 1.2; margin-right: 8px; }
.clock { width: 64px; display: flex; flex-direction: column; align-items: center; line-height: 18px; font-size: 11.3px; margin-right: 15px; letter-spacing: -.25px; }
.tray .note { margin-right: 0; }
#sheet text { font: 8.2px "DejaVu Sans", sans-serif; text-rendering: geometricPrecision; }
#sheet .red { fill: #840000; stroke: #840000; stroke-width: .2; }
#sheet .pin { fill: #a90000; stroke: #a90000; stroke-width: .3; font-size: 9px; }
#sheet .name { fill: #006464; stroke: #006464; stroke-width: .3; font-family: "DejaVu Sans Mono", monospace; font-size: 8.6px; }
#sheet .tag { fill: #840000; stroke: #840000; stroke-width: .3; font-family: "DejaVu Sans Mono", monospace; font-size: 9px; }
#sheet .heavy { font-weight: bold; }
#sheet .mark { font-size: 8.4px; font-family: "DejaVu Sans Mono", monospace; stroke-width: .3; }
#sheet .titletext { font-weight: bold; font-style: italic; font-size: 11px; }
.dk { stroke: #840000; fill: none; }
.soft { shape-rendering: auto; }
.body { stroke: #840000; fill: #ffffc2; }
.bar { fill: #840000; }
.wire { stroke: #009600; fill: none; }
.junction { fill: #009600; shape-rendering: auto; }
.page { stroke: #b4b4b0; fill: none; }
.cross { stroke: #000; }
.griddot { fill: #b9b9b9; }
.defs { position: absolute; }
```
FILE: script.js
```js
const pitch = 52.6;
const out = [];
const px = v => Math.floor(v) + 0.5;
const path = (cls, d) => out.push(`<path class="${cls}" d="${d}"/>`);
const rect = (cls, x, y, w, h, r = 0) => out.push(`<rect class="${cls}" x="${x}" y="${y}" width="${w}" height="${h}" rx="${r}"/>`);
const dot = (x, y) => out.push(`<circle class="junction" cx="${x}" cy="${y}" r="2.2"/>`);
// Text is placed by its left edge and vertical middle, fitted to a given length.
function text(cls, x, y, s, len, anchor = 'start', rot = 0) {
  const fit = len ? ` textLength="${len}" lengthAdjust="spacingAndGlyphs"` : '';
  const t = rot ? ` transform="translate(${x} ${y}) rotate(-90)" x="0" y="3"` : ` x="${x}" y="${y + 3}"`;
  out.push(`<text class="${cls}"${t} text-anchor="${anchor}"${fit}>${s}</text>`);
}

// grid
for (let i = -8; i < 27; i++) for (let j = -2; j < 15; j++) {
  const x = Math.floor(494.4 + i * 52.6), y = Math.floor(195.5 + j * 52.62);
  if (x > 38 && x < 1866 && y > 81) rect('griddot', x, y, i === 17 ? 2 : 1, 1);
}

// sheet border and frame
rect('page', 336.5, 90.5, 1230, 870);
rect('dk', 377.5, 131.5, 1148, 788);
rect('dk', 385.5, 140.5, 1132, 770);
for (let k = 1; k <= 5; k++) {
  const x = px(377.5 + k * 207.15);
  path('dk', `M${x} 131.500v9M${x} 910.500v9`);
}
for (let k = 1; k <= 3; k++) {
  const y = px(132 + k * 207.1);
  path('dk', `M377.500 ${y}h8M1517.500 ${y}h8`);
}
for (let k = 0; k < 6; k++) {
  const x = 484 + k * 207.1;
  text('red mark', x, 136, k + 1, 0, 'middle');
  text('red mark', x, 915, k + 1, 0, 'middle');
}
'ABCD'.split('').forEach((c, k) => {
  text('red mark', 381.5, 235.300 + k * 207.3, c, 0, 'middle');
  text('red mark', 1521, 235.300 + k * 207.3, c, 0, 'middle');
});

// title block
path('dk', 'M1069.500 910V778.500H1517M1069.500 842.500H1517M1069.500 867.500H1517M1069.500 883.500H1517M1069.500 896.500H1517M1152.500 883v13M1417.500 883v27');
text('red', 1074.5, 849, 'Sheet: /', 39);
text('red', 1074.5, 860, 'File: TrimPotMatrixMixer.kicad_sch', 159);
text('red titletext', 1075, 875.500, 'Title:', 31);
text('red', 1074.5, 891, 'Size: A4', 38);
text('red', 1165, 891, 'Date:', 24);
text('red heavy', 1427, 891, 'Rev:', 19);
text('red', 1074.5, 902, 'KiCad E.D.A.', 57);
text('red', 1141.5, 902, 'kicad (6.0.4)', 60);
text('red', 1426, 902, 'Id: 1/1', 34);

for (let n = 0; n < 8; n++) {
  const x = px(615 + n * pitch), x2 = px(636 + n * pitch), id = n + 1;
  // top jack
  rect('body', x - 6, 190.5, 32, 42);
  rect('bar', x - 3.5, 195, 6, 32, 1);
  path('dk', `M${x} 227V243M${x2} 195v6M${x2} 212V243`);
  path('dk soft', `M${x2} 201l-6 5.500 6 5.500`);
  text('name', x + 32, 211, 'UJ' + id, 14);
  text('pin', x - 4, 240.5, '1', 0, 'start', 1);
  text('pin', x2 - 4, 240.5, '2', 0, 'start', 1);
  // bottom jack
  rect('body', x - 6, 790.5, 32, 42);
  rect('bar', x2 - 3.500, 796, 6, 32, 1);
  path('dk', `M${x2} 778V796M${x} 778v33M${x} 822v5.500`);
  path('dk soft', `M${x} 811l5.500 5.500-5.500 5.500`);
  text('name', x + 32, 811, 'DJ' + id, 14);
  text('pin', x - 4, 787.5, '2', 0, 'start', 1);
  text('pin', x2 - 4, 787.5, '1', 0, 'start', 1);
  for (const [cx, s] of [[x, 'P'], [x2, 'N']]) {
    path('dk', `M${cx - 6} 264.500V243.500h11v21M${cx - 6} 758.500V778.500h11v-20`);
    path('dk soft', `M${cx - 6} 264.500l6 5 5-5M${cx - 6} 758.500l6-5 5 5`);
    text('tag', cx - .2, 262, 'U' + s + id, 15, 'start', 1);
    text('tag', cx - .2, 774.500, 'D' + s + id, 15, 'start', 1);
    path('wire', `M${cx} 243V778`);
  }
}

for (let n = 0; n < 8; n++) {
  const y = px(311.5 + n * 52.6), z = px(342.6 + n * 52.65), id = n + 1, a = y + 5, b = z - 5;
  path('wire', `M546 ${a}H572.500V${y}H1046.500V${a}h26M546 ${b}H572.500V${z}H1046.500V${b}h26`);
  // left jack
  rect('body', 494.5, y, 42, z - y);
  rect('bar', 498, z - 7.5, 33, 6, 2);
  path('dk', `M499 ${a}h5.500M515 ${a}H546M531 ${b}H546`);
  path('dk soft', `M504 ${a}l5.500 5 5.500-5`);
  text('name', 475.5, y + 10.5, 'LJ' + id, 13);
  text('pin', 538, y + 2, '2');
  text('pin', 538, b - 3.5, '1');
  // right jack
  rect('body', 1083.5, y, 42, z - y);
  rect('bar', 1089, y + 2.5, 32, 6);
  path('dk', `M1072 ${a}h17M1072 ${b}h33M1115 ${b}h6`);
  path('dk soft', `M1105 ${b}l4.500-5 5.500 5`);
  text('name', 1131.5, y + 15.5, 'RJ' + id, 14);
  text('pin', 1075, y + 2, '1');
  text('pin', 1075, b - 3.5, '2');
  // net labels
  for (const [t, s] of [[y - 5, 'N'], [b, 'P']]) {
    path('dk', `M568.500 ${t}H548.500v10.500H568.500M1051 ${t}H1072v10.500H1051`);
    path('dk soft', `M568.500 ${t}l4.500 5-4.500 5.500M1051 ${t}l-4.500 5 4.500 5.500`);
    text('tag', 552, t + 5.4, 'L' + s + id, 14.500);
    text('tag', 1053.5, t + 5.4, 'R' + s + id, 14.500);
  }
  // trim pots
  for (let m = 0; m < 8; m++) {
    const x = px(599.38 + m * 52.605), w = px(615 + m * pitch), r = n * 8 + m + 1;
    path('dk', `M${x} ${y}v5M${x} ${b}v5M${x - 4} ${a}h8V${b}h-8zM${x + 6} ${y + 12.5}v7M${x + 6} ${y + 16}H${w}`);
    text('name', x - 11, y + 10.5, 'R' + r, r < 10 ? 9.5 : 14.500, 'end');
    text('pin', x - 4, y + 5, '1', 0, 'start', 1);
    text('pin', x - 4, z, '3', 0, 'start', 1);
    text('pin', x + 10, y + 11.5, '2');
    dot(x, y); dot(x, z); dot(w, y + 16);
  }
}
path('cross', 'M990 952.500h80M1030.500 912v57');
document.getElementById('sheet').innerHTML = out.join('');
```
